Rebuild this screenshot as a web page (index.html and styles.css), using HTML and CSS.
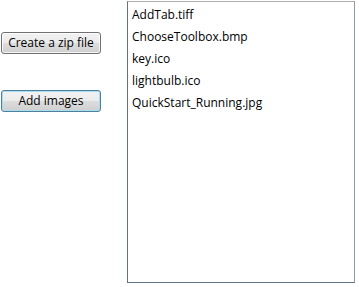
FILE: index.html
```html
<!DOCTYPE html>
<html lang="en">
<head>
    <meta charset="UTF-8">
    <title>Zip Images</title>
    <link rel="stylesheet" href="styles.css">
</head>
<body>
    <div class="window">
        <div class="actions">
            <button class="btn">Create a zip file</button>
            <button class="btn btn-default">Add images</button>
        </div>
        <ul class="file-list">
            <li>AddTab.tiff</li>
            <li>ChooseToolbox.bmp</li>
            <li>key.ico</li>
            <li>lightbulb.ico</li>
            <li>QuickStart_Running.jpg</li>
        </ul>
    </div>
</body>
</html>
```

FILE: styles.css
```css
body {
    margin: 0;
    background-color: #ffffff;
    font-family: "Open Sans", "Noto Sans", sans-serif;
    font-size: 12px;
    color: #000000;
}
.window {
    display: flex;
    width: 359px;
    height: 287px;
}
.actions {
    width: 126px;
    padding-left: 1px;
    padding-top: 32px;
    display: flex;
    flex-direction: column;
    align-items: flex-start;
    gap: 36px;
}
.btn {
    width: 100px;
    height: 22px;
    padding: 0 0 1px 0;
    font-family: inherit;
    font-size: 12px;
    color: #000000;
    border: 1px solid #707070;
    border-radius: 3px;
    background: linear-gradient(#f2f2f2 0%, #ebebeb 50%, #dddddd 50%, #cfcfcf 100%);
    box-shadow: inset 0 0 0 1px rgba(255, 255, 255, 0.8);
    cursor: pointer;
}
.btn-default {
    border-color: #4f7f99;
    box-shadow: inset 0 0 0 1px #a6def2;
}
.file-list {
    list-style: none;
    margin: 1px 0 0 0;
    padding: 2px 0 0 0;
    width: 226px;
    height: 278px;
    border: 1px solid #5f7386;
    border-top-color: #abadb3;
    border-right-color: #8d9cab;
}
.file-list li {
    height: 22px;
    line-height: 22px;
    padding-left: 4px;
}
```
